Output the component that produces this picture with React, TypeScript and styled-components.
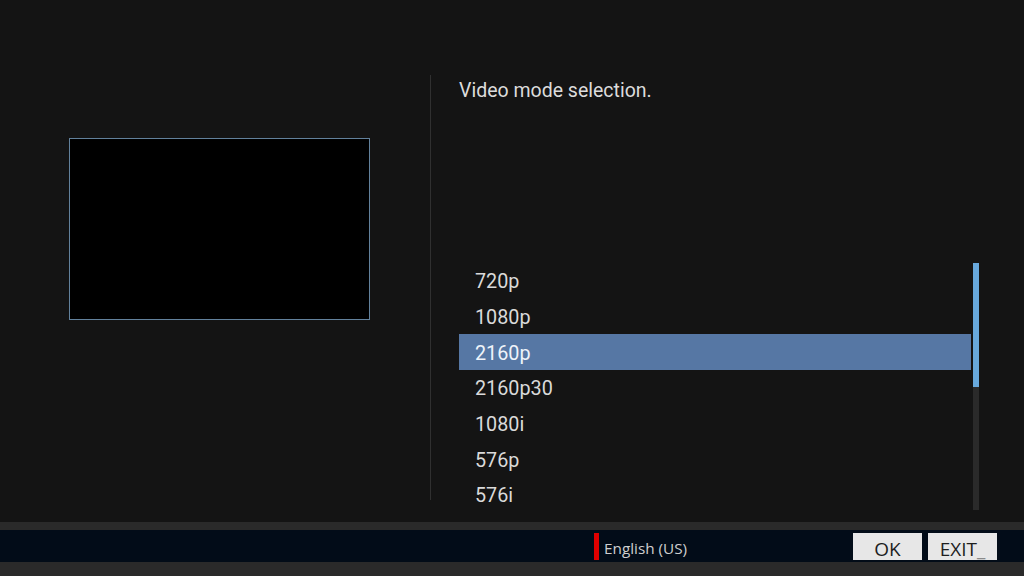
import React from "react";
import styled, { createGlobalStyle } from "styled-components";

const Global = createGlobalStyle`
  html, body { margin: 0; padding: 0; background: #141414; }
  body { width: 1024px; height: 576px; overflow: hidden; font-family: Roboto, "Liberation Sans", sans-serif; }
  * { box-sizing: border-box; }
`;

const Screen = styled.div`
  width: 1024px;
  height: 576px;
  display: flex;
  flex-direction: column;
  background: #141414;
`;

const Main = styled.div`
  height: 522px;
  display: flex;
`;

const LeftPanel = styled.div`
  width: 430px;
  padding: 138px 0 0 69px;
`;

const Preview = styled.div`
  width: 301px;
  height: 182px;
  background: #000;
  border: 1px solid #62819c;
`;

const Divider = styled.div`
  width: 1px;
  margin-top: 75px;
  height: 425px;
  background: #303030;
`;

const RightPanel = styled.div`
  flex: 1;
  padding: 79px 0 0 28px;
  display: flex;
  flex-direction: column;
`;

const Title = styled.div`
  font-size: 19.5px;
  line-height: 24px;
  color: #dcdcdc;
  height: 184px;
`;

const ListArea = styled.div`
  display: flex;
  gap: 2px;
`;

const List = styled.div`
  width: 512px;
  display: flex;
  flex-direction: column;
`;

const Row = styled.div<{ $selected?: boolean }>`
  height: 35.67px;
  display: flex;
  align-items: center;
  padding: 2px 0 0 16px;
  font-size: 19.8px;
  color: ${(p) => (p.$selected ? "#eef3fa" : "#dadada")};
  background: ${(p) => (p.$selected ? "#5677a4" : "transparent")};
`;

const Track = styled.div`
  width: 6px;
  height: 247px;
  background: #2a2a2a;
  position: relative;
`;

const Thumb = styled.div`
  position: absolute;
  left: 0;
  top: 0;
  width: 6px;
  height: 124px;
  background: #68a9dd;
`;

const TopBand = styled.div`
  height: 8px;
  background: #2a2a2a;
`;

const Footer = styled.div`
  height: 32px;
  background: #020c18;
  display: flex;
  align-items: center;
  padding: 0 27px 0 594px;
  font-family: "Open Sans", "Liberation Sans", sans-serif;
`;

const Lang = styled.div`
  display: flex;
  align-items: center;
  height: 27px;
  gap: 5px;
  font-size: 15.3px;
  color: #cfcfcf;
`;

const LangText = styled.span`
  padding-top: 3px;
`;

const RedMark = styled.div`
  width: 5px;
  height: 27px;
  background: #e00000;
`;

const Buttons = styled.div`
  margin-left: auto;
  display: flex;
  gap: 6px;
`;

const Button = styled.div`
  width: 69px;
  height: 27px;
  background: #e7e7e7;
  color: #1e1e1e;
  font-size: 19px;
  line-height: 27px;
  padding-top: 6px;
  display: flex;
  justify-content: center;
  align-items: center;
`;

const Cursor = styled.span`
  color: #8a8a8a;
`;

const BottomBand = styled.div`
  flex: 1;
  background: #2a2a2a;
`;

const modes = ["720p", "1080p", "2160p", "2160p30", "1080i", "576p", "576i"];

export default function App() {
  return (
    <Screen>
      <Global />
      <Main>
        <LeftPanel>
          <Preview />
        </LeftPanel>
        <Divider />
        <RightPanel>
          <Title>Video mode selection.</Title>
          <ListArea>
            <List>
              {modes.map((m) => (
                <Row key={m} $selected={m === "2160p"}>
                  {m}
                </Row>
              ))}
            </List>
            <Track>
              <Thumb />
            </Track>
          </ListArea>
        </RightPanel>
      </Main>
      <TopBand />
      <Footer>
        <Lang>
          <RedMark />
          <LangText>English (US)</LangText>
        </Lang>
        <Buttons>
          <Button>OK</Button>
          <Button>
            EXIT<Cursor>_</Cursor>
          </Button>
        </Buttons>
      </Footer>
      <BottomBand />
    </Screen>
  );
}
